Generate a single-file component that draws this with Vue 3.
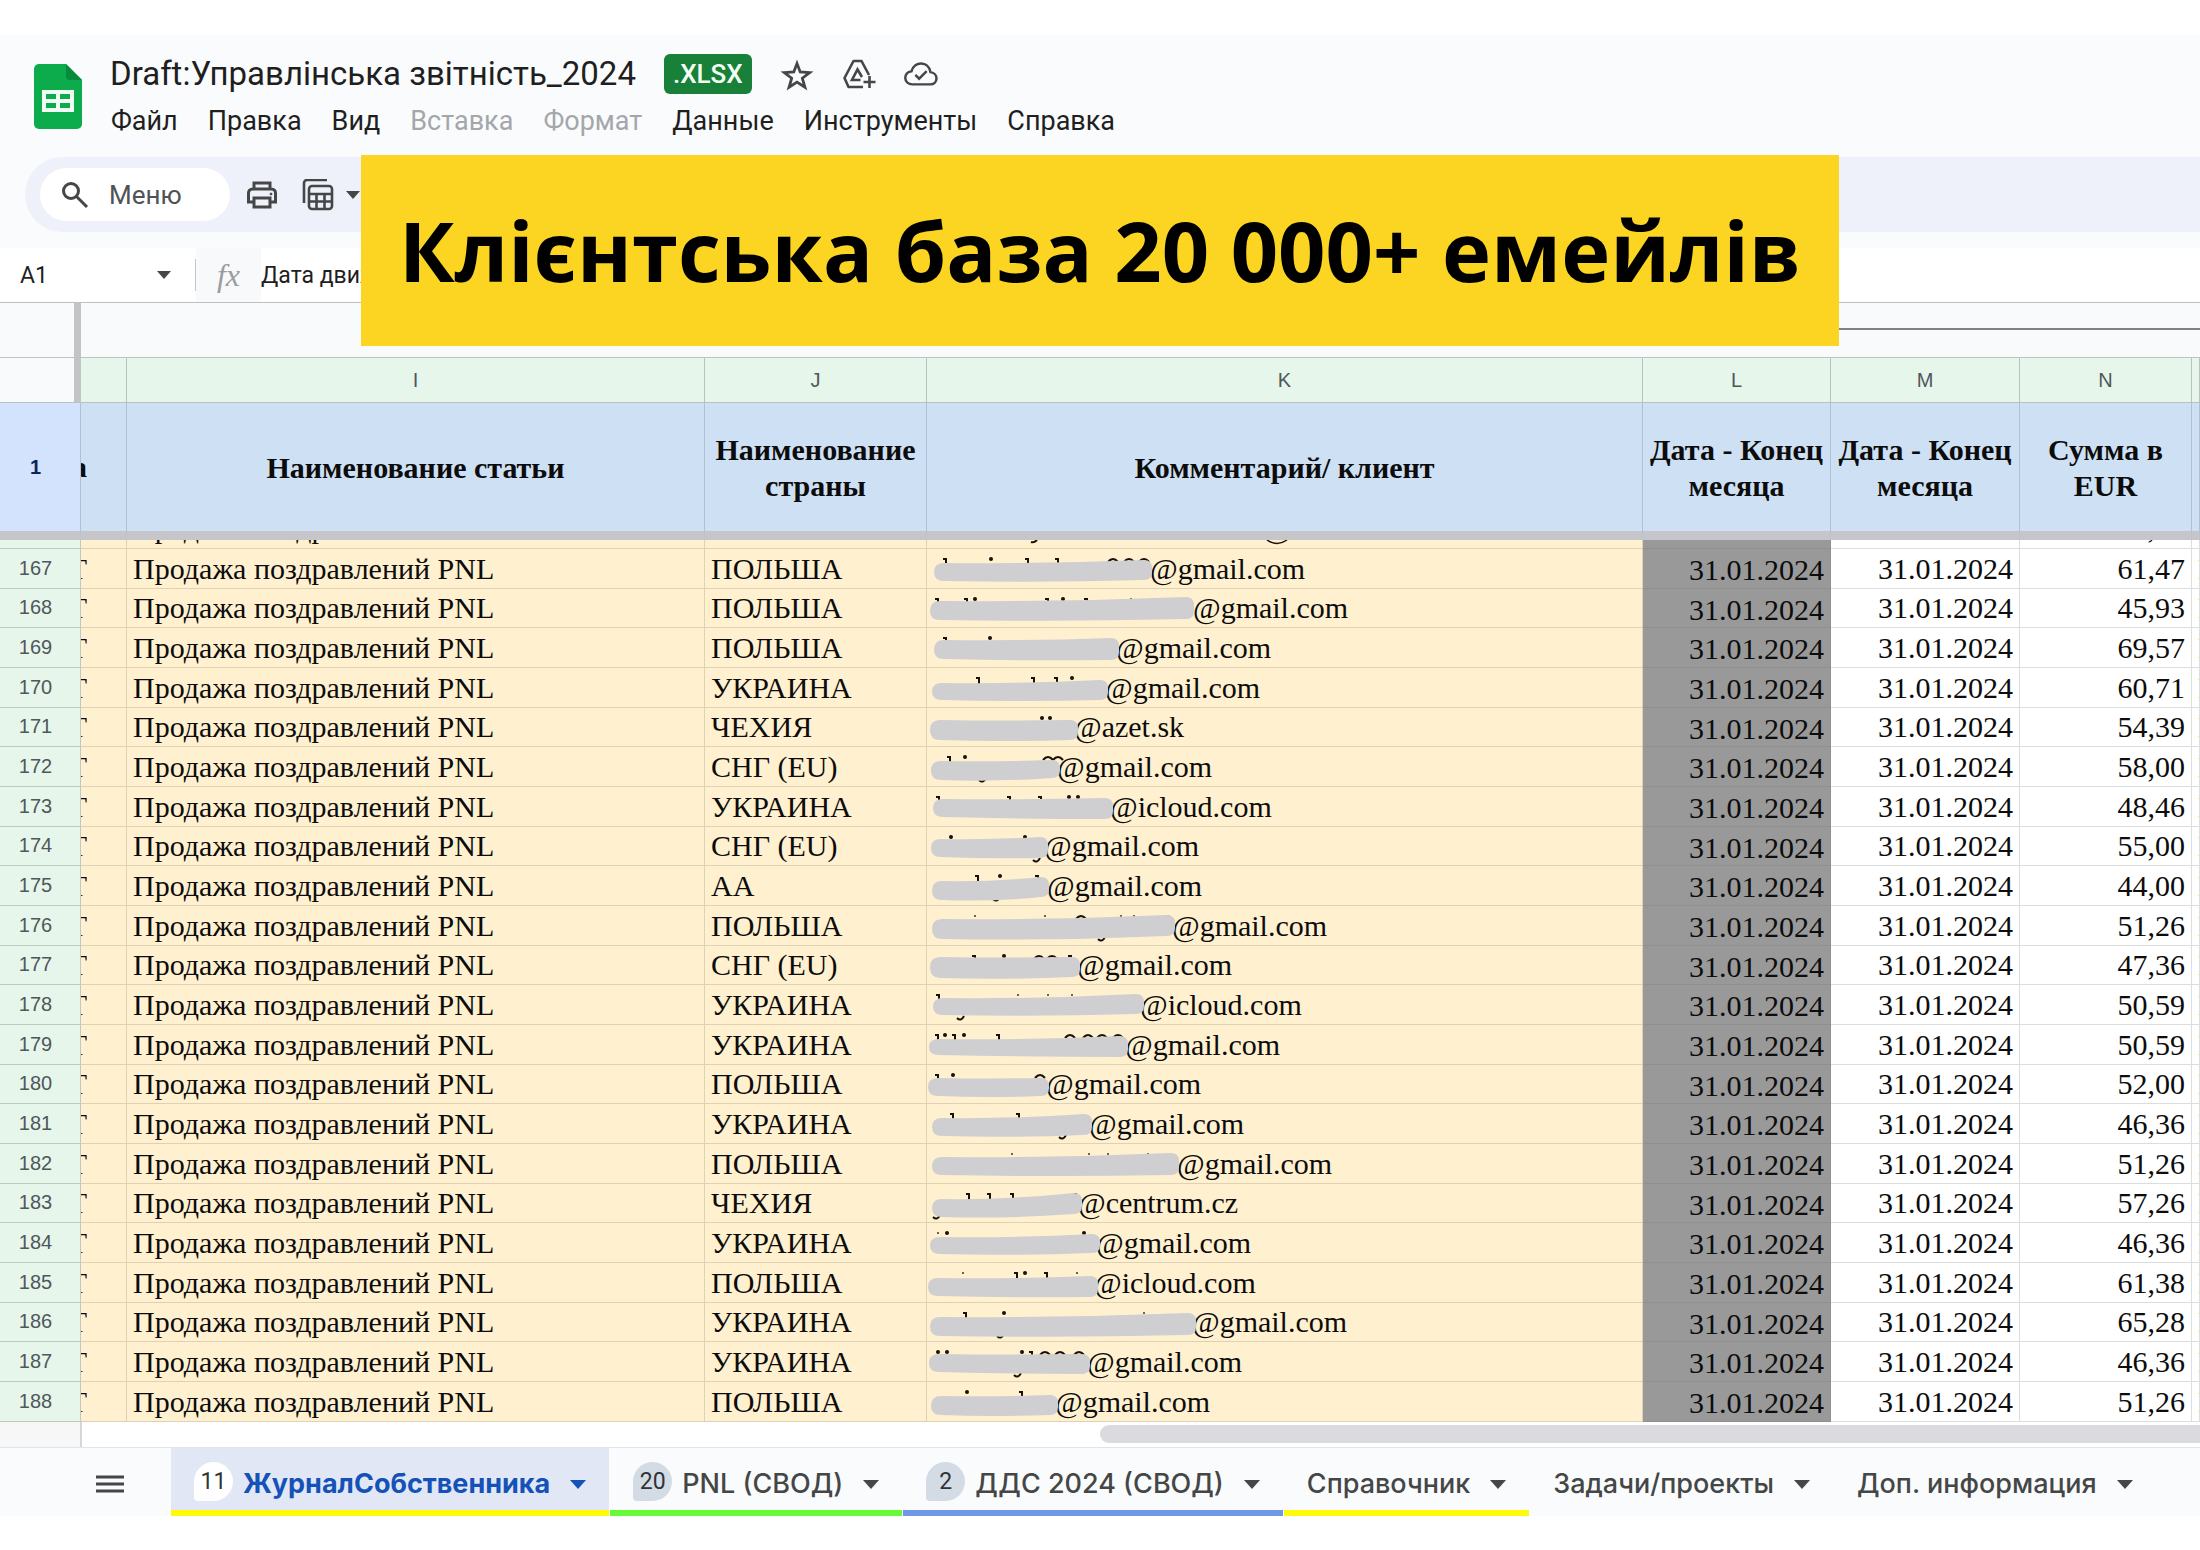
<script setup>
const menus = [
  { label: 'Файл' },
  { label: 'Правка' },
  { label: 'Вид' },
  { label: 'Вставка', disabled: true },
  { label: 'Формат', disabled: true },
  { label: 'Данные' },
  { label: 'Инструменты' },
  { label: 'Справка' },
]

const columns = ['', 'I', 'J', 'K', 'L', 'M', 'N', '']

const article = 'Продажа поздравлений PNL'
const date = '31.01.2024'

// blob: [left, left top, left bottom, right, right top, right bottom]
// at: where the mail domain starts; ticks, dots, arcs, specks and tails are the bits left uncovered
const rows = [
  { n: 167, country: 'ПОЛЬША', domain: '@gmail.com', sum: '61,47', at: 223, blob: [7, 14, 32, 225, 11, 31], ticks: [18, 100, 130], dots: [64], arcs: [186, 202, 217] },
  { n: 168, country: 'ПОЛЬША', domain: '@gmail.com', sum: '45,93', at: 266, blob: [3, 12, 31, 267, 8, 30], ticks: [10, 39, 120, 159], dots: [48, 136], specks: [204] },
  { n: 169, country: 'ПОЛЬША', domain: '@gmail.com', sum: '69,57', at: 189, blob: [7, 12, 31, 192, 10, 32], ticks: [18], dots: [63] },
  { n: 170, country: 'УКРАИНА', domain: '@gmail.com', sum: '60,71', at: 178, blob: [5, 15, 32, 181, 12, 32], ticks: [51, 106, 129], dots: [145] },
  { n: 171, country: 'ЧЕХИЯ', domain: '@azet.sk', sum: '54,39', at: 147, blob: [3, 12, 32, 151, 12, 32], dots: [115, 123] },
  { n: 172, country: 'СНГ (EU)', domain: '@gmail.com', sum: '58,00', at: 130, blob: [4, 14, 33, 133, 13, 31], ticks: [22], dots: [38], arcs: [121, 131], tails: [56] },
  { n: 173, country: 'УКРАИНА', domain: '@icloud.com', sum: '48,46', at: 183, blob: [6, 12, 30, 186, 11, 32], ticks: [11, 82, 113], dots: [142, 151] },
  { n: 174, country: 'СНГ (EU)', domain: '@gmail.com', sum: '55,00', at: 117, blob: [4, 12, 30, 121, 10, 31], dots: [24, 98], tails: [110] },
  { n: 175, country: 'АА', domain: '@gmail.com', sum: '44,00', at: 120, blob: [5, 15, 34, 122, 11, 31], ticks: [50, 110], dots: [73], tails: [70] },
  { n: 176, country: 'ПОЛЬША', domain: '@gmail.com', sum: '51,26', at: 245, blob: [5, 13, 33, 248, 9, 30], specks: [48, 118, 194, 207, 241], arcs: [154], tails: [175] },
  { n: 177, country: 'СНГ (EU)', domain: '@gmail.com', sum: '47,36', at: 150, blob: [3, 11, 32, 153, 11, 31], ticks: [47, 143], dots: [77], arcs: [112, 125] },
  { n: 178, country: 'УКРАИНА', domain: '@icloud.com', sum: '50,59', at: 213, blob: [6, 13, 30, 217, 9, 29], ticks: [11], specks: [91, 121, 145], tails: [34] },
  { n: 179, country: 'УКРАИНА', domain: '@gmail.com', sum: '50,59', at: 198, blob: [2, 14, 30, 201, 11, 32], ticks: [10, 27, 71], dots: [18, 37], arcs: [143, 161, 175, 191] },
  { n: 180, country: 'ПОЛЬША', domain: '@gmail.com', sum: '52,00', at: 119, blob: [1, 13, 31, 122, 13, 31], ticks: [10], dots: [26], arcs: [113] },
  { n: 181, country: 'УКРАИНА', domain: '@gmail.com', sum: '46,36', at: 162, blob: [5, 14, 32, 165, 10, 31], ticks: [25, 91], tails: [136] },
  { n: 182, country: 'ПОЛЬША', domain: '@gmail.com', sum: '51,26', at: 250, blob: [5, 13, 31, 252, 9, 31], specks: [85, 162, 181, 221] },
  { n: 183, country: 'ЧЕХИЯ', domain: '@centrum.cz', sum: '57,26', at: 151, blob: [5, 15, 33, 155, 9, 30], ticks: [41, 62, 85, 148], tails: [10] },
  { n: 184, country: 'УКРАИНА', domain: '@gmail.com', sum: '46,36', at: 169, blob: [3, 14, 31, 173, 11, 30], dots: [20, 157], specks: [11] },
  { n: 185, country: 'ПОЛЬША', domain: '@icloud.com', sum: '61,38', at: 167, blob: [1, 15, 33, 171, 13, 34], ticks: [89, 119], dots: [98], specks: [36, 150] },
  { n: 186, country: 'УКРАИНА', domain: '@gmail.com', sum: '65,28', at: 265, blob: [3, 14, 33, 269, 10, 32], ticks: [38], dots: [77], specks: [217], tails: [74] },
  { n: 187, country: 'УКРАИНА', domain: '@gmail.com', sum: '46,36', at: 160, blob: [2, 12, 30, 163, 12, 32], ticks: [104], dots: [11, 20, 95], arcs: [118, 133, 152], tails: [91] },
  { n: 188, country: 'ПОЛЬША', domain: '@gmail.com', sum: '51,26', at: 128, blob: [4, 14, 33, 131, 13, 33], ticks: [94], dots: [40] },
]

const blobPath = ([x0, t0, b0, x1, t1, b1]) => {
  const m = (x0 + x1) / 2
  return `M${x0} ${(t0 + b0) / 2} Q${x0} ${t0} ${x0 + 10} ${t0} Q${m} ${t0 + 1} ${x1 - 8} ${t1} Q${x1} ${t1} ${x1} ${t1 + 8} V${b1 - 8} Q${x1} ${b1} ${x1 - 8} ${b1} Q${m} ${b0 + 2} ${x0 + 10} ${b0} Q${x0} ${b0} ${x0} ${(t0 + b0) / 2}Z`
}

const tabs = [
  { label: 'ЖурналСобственника', count: 11, color: '#fff90a', active: true },
  { label: 'PNL (СВОД)', count: 20, color: '#66fa38' },
  { label: 'ДДС 2024 (СВОД)', count: 2, color: '#7096e6' },
  { label: 'Справочник', color: '#fff90a' },
  { label: 'Задачи/проекты', color: 'transparent' },
  { label: 'Доп. информация', color: 'transparent' },
]
</script>

<template>
  <div class="page">
    <header class="header">
      <svg class="logo" viewBox="0 0 48 65" aria-hidden="true">
        <path d="M5 0H32L48 16V60a5 5 0 0 1-5 5H5a5 5 0 0 1-5-5V5a5 5 0 0 1 5-5Z" fill="#0cab4b" />
        <path d="M32 0 48 16H36a4 4 0 0 1-4-4Z" fill="#078a3a" />
        <path fill-rule="evenodd" d="M8 26H40V48H8ZM12 30V35H22V30ZM26 30V35H36V30ZM12 39V44H22V39ZM26 39V44H36V39Z" fill="#f1fbf4" />
      </svg>
      <div>
        <div class="title-line">
          <h1 class="title">Draft:Управлінська звітність_2024</h1>
          <span class="badge">.XLSX</span>
          <button class="icon-btn" aria-label="Пометить">
            <svg width="34" height="34" viewBox="-1 -2 32 32" fill="none" stroke="#444746" stroke-width="2.6">
              <path d="M15 4 18 12 27 12.600 20 18 22.500 26.500 15 21.700 7.500 26.500 10 18 3 12.600 12 12Z" />
            </svg>
          </button>
          <button class="icon-btn" aria-label="Добавить на Диск">
            <svg width="34" height="32" viewBox="0 0 34 32" fill="none" stroke="#444746" stroke-width="2.6">
              <path d="M27 17 19.500 3H11.500L2.500 20 6.500 29H21" stroke-linejoin="round" />
              <path d="M18.500 22H10L15.500 11.500 20 19" />
              <path d="M27.500 18V30M21.500 24H33.500" />
            </svg>
          </button>
          <button class="icon-btn" aria-label="Сохранено">
            <svg width="34" height="28" viewBox="0 0 36 28" fill="none" stroke="#444746" stroke-width="2.600">
              <path d="M9 25C-1 25-1 12 8 11 11 0 26 0 28 12 37 13 36 25 28 25Z" />
              <path d="M12 15 16 19 24 11" />
            </svg>
          </button>
        </div>
        <nav class="menu">
          <button v-for="m in menus" :key="m.label" :disabled="m.disabled">{{ m.label }}</button>
        </nav>
      </div>
    </header>

    <div class="toolbar-row">
      <div class="toolbar">
        <label class="search">
          <svg width="28" height="28" viewBox="0 0 28 28" fill="none" stroke="#444746" stroke-width="3">
            <circle cx="10" cy="10" r="7.500" />
            <path d="M15.500 15.500 26 26" />
          </svg>
          <input type="text" placeholder="Меню" aria-label="Меню" />
        </label>
        <button class="icon-btn print" aria-label="Печать">
          <svg width="32" height="28" viewBox="0 0 32 28" fill="none" stroke="#444746" stroke-width="3">
            <path d="M8 8V2H24V8M8 21H2.500V12a4 4 0 0 1 4-4H25.500a4 4 0 0 1 4 4V21H24" />
            <path d="M8 17H24V26H8Z" />
            <circle cx="25" cy="13" r="1" fill="#444746" stroke-width="1" />
          </svg>
        </button>
        <button class="icon-btn views" aria-label="Режимы просмотра">
          <svg width="32" height="32" viewBox="0 0 32 32" fill="none" stroke="#444746" stroke-width="2.600">
            <path d="M2 24V4a3 3 0 0 1 3-3H25" />
            <path d="M10 7H27a3 3 0 0 1 3 3V27a3 3 0 0 1-3 3H10a3 3 0 0 1-3-3V10a3 3 0 0 1 3-3Z" />
            <path d="M7 15H30M7 22.500H30M14.500 15V30M22.500 15V30" />
          </svg>
          <svg width="14" height="8" viewBox="0 0 14 8"><path d="M0 0H14L7 8Z" fill="#444746" /></svg>
        </button>
      </div>
    </div>

    <div class="formula">
      <input class="cell-name" type="text" value="A1" aria-label="Ячейка" />
      <button class="icon-btn" aria-label="Список диапазонов">
        <svg width="14" height="8" viewBox="0 0 14 8"><path d="M0 0H14L7 8Z" fill="#444746" /></svg>
      </button>
      <span class="rule"></span>
      <span class="fx">fx</span>
      <input class="formula-text" type="text" value="Дата движ" aria-label="Формула" />
    </div>

    <div class="groups">
      <div class="groups-corner"></div>
      <div class="groups-line"></div>
    </div>

    <table class="sheet">
      <colgroup>
        <col class="w-head" /><col class="w-h" /><col class="w-i" /><col class="w-j" /><col />
        <col class="w-l" /><col class="w-m" /><col class="w-n" /><col class="w-o" />
      </colgroup>
      <thead>
        <tr class="letters">
          <td class="corner"></td>
          <th v-for="(c, i) in columns" :key="i" scope="col">{{ c }}</th>
        </tr>
        <tr class="titles">
          <th scope="row">1</th>
          <td><div class="cut">а</div></td>
          <td>Наименование статьи</td>
          <td>Наименование страны</td>
          <td>Комментарий/ клиент</td>
          <td>Дата - Конец месяца</td>
          <td>Дата - Конец месяца</td>
          <td>Сумма в<br />EUR</td>
          <td></td>
        </tr>
      </thead>
      <tbody>
        <tr class="peek">
          <th></th>
          <td class="tan"></td>
          <td class="tan"><div class="sliver">{{ article }}</div></td>
          <td class="tan"></td>
          <td class="tan mail">
            <svg class="cover" width="400" height="8" viewBox="0 0 400 8" fill="none" stroke="#16120a">
              <path d="M104 2Q107 3 110 0" stroke-width="2" />
              <path d="M340 0Q350 7 360 0" stroke-width="1.5" />
            </svg>
          </td>
          <td class="dim"></td>
          <td></td>
          <td class="num"><div class="sliver">51,26</div></td>
          <td></td>
        </tr>
        <tr v-for="r in rows" :key="r.n" class="row">
          <th scope="row">{{ r.n }}</th>
          <td class="tan"><div class="cut">Т</div></td>
          <td class="tan">{{ article }}</td>
          <td class="tan">{{ r.country }}</td>
          <td class="tan mail">
            <span :style="{ paddingLeft: r.at + 'px' }">{{ r.domain }}</span>
            <svg class="cover" width="300" height="39" viewBox="0 0 300 39">
              <g fill="none" stroke="#16120a">
                <path v-for="x in r.ticks" :key="'t' + x" :d="`M${x - 2} 10H${x + 1}V16`" stroke-width="2" />
                <path v-for="x in r.arcs" :key="'a' + x" :d="`M${x - 5} 13Q${x} 7 ${x + 5} 13`" stroke-width="2" />
                <path v-for="x in r.tails" :key="'d' + x" :d="`M${x - 4} 33Q${x} 37 ${x + 3} 31`" stroke-width="2" />
              </g>
              <circle v-for="x in r.dots" :key="'o' + x" :cx="x" cy="10" r="2" fill="#16120a" />
              <circle v-for="x in r.specks" :key="'s' + x" :cx="x" cy="10" r="1" fill="#3c3626" />
              <path :d="blobPath(r.blob)" fill="#cfcfd1" />
            </svg>
          </td>
          <td class="dim num">{{ date }}</td>
          <td class="num">{{ date }}</td>
          <td class="num">{{ r.sum }}</td>
          <td>П</td>
        </tr>
      </tbody>
    </table>

    <div class="scroll">
      <div class="scroll-corner"></div>
      <div class="thumb"></div>
    </div>

    <footer class="tabs">
      <button class="icon-btn all" aria-label="Все листы">
        <svg width="28" height="18" viewBox="0 0 28 18" stroke="#444746" stroke-width="3">
          <path d="M0 2H28M0 9H28M0 16H28" />
        </svg>
      </button>
      <button v-for="t in tabs" :key="t.label" class="tab" :class="{ active: t.active }" :style="{ borderBottomColor: t.color }">
        <span v-if="t.count" class="count">{{ t.count }}</span>
        <span>{{ t.label }}</span>
        <svg width="16" height="9" viewBox="0 0 16 9"><path d="M0 0H16L8 9Z" fill="currentColor" /></svg>
      </button>
    </footer>

    <div class="banner"><p>Клієнтська база 20 000+ емейлів</p></div>
  </div>
</template>

<style>
body {
  margin: 0;
  background: #fff;
}
</style>

<style scoped>
.page {
  position: relative;
  padding-top: 35px;
  overflow: hidden;
  font-family: Roboto, sans-serif;
  color: #1f1f1f;
}
button {
  padding: 0;
  border: 0;
  background: none;
  font: inherit;
  color: inherit;
}
input {
  min-width: 0;
  padding: 0;
  border: 0;
  background: none;
  font: inherit;
  color: inherit;
}
.icon-btn {
  display: flex;
  align-items: center;
}
.header {
  display: flex;
  gap: 28px;
  padding: 19px 34px 20px;
  background: #fafbfd;
}
.logo {
  width: 48px;
  height: 65px;
  margin-top: 10px;
}
.title-line {
  display: flex;
  align-items: center;
  height: 40px;
  gap: 28px;
}
.title {
  margin: 0;
  font-size: 33px;
  font-weight: 400;
  line-height: 40px;
}
.badge {
  padding: 0 9px;
  border-radius: 6px;
  background: #188038;
  color: #f4fff6;
  font-size: 26px;
  font-weight: 500;
  line-height: 40px;
}
.menu {
  display: flex;
  gap: 30px;
  margin-top: 11px;
  padding-left: 1px;
  font-size: 27px;
  line-height: 32px;
}
.menu button:disabled {
  color: #a4a7aa;
}
.toolbar-row {
  padding: 0 0 16px 25px;
  background: #fafbfd;
}
.toolbar {
  display: flex;
  align-items: center;
  height: 75px;
  padding-left: 15px;
  border-radius: 38px 0 0 38px;
  background: #eef1fa;
}
.search {
  display: flex;
  align-items: center;
  gap: 20px;
  width: 190px;
  height: 53px;
  padding-left: 21px;
  box-sizing: border-box;
  border-radius: 27px;
  background: #fff;
}
.search input {
  flex: 1;
  font-size: 26px;
}
.search input::placeholder {
  color: #505356;
  opacity: 1;
}
.print {
  margin-left: 16px;
}
.views {
  gap: 12px;
  margin-left: 24px;
}
.formula {
  display: flex;
  align-items: center;
  height: 54px;
  border-bottom: 1px solid #bdbfc1;
  font-size: 23px;
}
.cell-name {
  width: 137px;
  padding-left: 20px;
}
.rule {
  width: 1px;
  height: 32px;
  margin-left: 24px;
  background: #c4c7c5;
}
.fx {
  width: 65px;
  background: #f8f9fa;
  color: #9a9da0;
  font: italic 32px/54px "Liberation Serif", serif;
  text-align: center;
}
.formula-text {
  flex: 1;
}
.groups {
  display: flex;
  height: 54px;
  border-bottom: 1px solid #bfc2c1;
  background: #f9fafb;
}
.groups-corner {
  width: 74px;
  border-right: 7px solid #c3c4c5;
}
.groups-line {
  flex: 1;
  height: 25px;
  margin-left: 40%;
  border-bottom: 2px solid #7f8182;
}
.sheet {
  width: 100%;
  table-layout: fixed;
  border-spacing: 0;
  font: 30px/36px "Liberation Serif", serif;
  color: #0c0c0c;
}
.w-head { width: 81px; }
.w-h { width: 46px; }
.w-i { width: 578px; }
.w-j { width: 222px; }
.w-l { width: 188px; }
.w-m { width: 189px; }
.w-n { width: 172px; }
.w-o { width: 8px; }
.sheet th,
.sheet td {
  box-sizing: border-box;
  padding: 0 6px;
  border: solid #dcdddd;
  border-width: 0 1px 1px 0;
  overflow: hidden;
  white-space: nowrap;
  text-align: left;
}
.sheet th {
  font: 400 20px/24px "Liberation Sans", sans-serif;
  color: #50575b;
  text-align: center;
}
.sheet .letters td,
.sheet .letters th {
  height: 45px;
  background: #e6f6eb;
  border-color: #b5c3bb;
}
.sheet .letters .corner {
  background: #f9fafb;
  border-right: 7px solid #c3c4c5;
}
.sheet .titles th,
.sheet .titles td {
  height: 137px;
  background: #cee0f4;
  border-right-color: #b0c1d5;
  border-bottom: 9px solid #c6c6ca;
  font-weight: 700;
  text-align: center;
  white-space: normal;
}
.sheet .titles td {
  padding: 2px 0 0;
}
.sheet .titles th {
  padding-right: 15px;
  background: #d3e3fd;
  color: #0d2650;
}
.cut {
  display: flex;
  justify-content: flex-end;
  width: 6px;
  overflow: hidden;
}
.sheet td:nth-child(2) {
  padding: 0;
}
.sheet tbody th {
  padding-right: 15px;
  padding-bottom: 2px;
  background: #e6f6eb;
  border-color: #bccabf;
}
.sheet .row th,
.sheet .row td {
  height: 40px;
  line-height: 34px;
}
.sheet .row:nth-child(3n) th,
.sheet .row:nth-child(3n) td {
  height: 39px;
}
.sheet .peek th,
.sheet .peek td {
  height: 9px;
  padding-bottom: 0;
  line-height: 40px;
}
.sliver {
  display: flex;
  flex-direction: column;
  justify-content: flex-end;
  height: 8px;
  overflow: hidden;
}
.sheet .tan {
  background: #fff0d0;
  border-color: #dfd2b2;
}
.sheet .mail {
  position: relative;
}
.mail span {
  position: relative;
  margin-left: -6px;
}
.cover {
  position: absolute;
  top: 0;
  left: 0;
}
.sheet .num {
  text-align: right;
}
.sheet .dim {
  padding-top: 3px;
  background: #999;
  border-color: #909090;
}
.sheet .peek .dim {
  padding-top: 0;
}
.scroll {
  display: flex;
  justify-content: space-between;
  height: 25px;
  border-bottom: 1px solid #e1e3e6;
}
.scroll-corner {
  width: 80px;
  border-right: 2px solid #d5d6d8;
  background: #f7f7f8;
}
.thumb {
  width: 50%;
  height: 18px;
  margin-top: 3px;
  border-radius: 9px 0 0 9px;
  background: #dadadf;
}
.tabs {
  display: flex;
  height: 68px;
  background: #fafbfd;
  font: 500 27px/32px Inter, sans-serif;
  color: #444746;
}
.all {
  padding: 4px 47px 0 96px;
}
.tab {
  display: flex;
  align-items: center;
  box-sizing: border-box;
  height: 68px;
  padding: 10px 23px 0;
  border-bottom: 6px solid transparent;
  margin-right: 1px;
  white-space: nowrap;
}
.tab.active {
  background: #e1e7f5;
  color: #1552b8;
  font-weight: 700;
}
.tab svg {
  margin-left: 20px;
}
.count {
  width: 39px;
  margin: 0 10px 6px 0;
  border-radius: 20px 20px 20px 4px;
  background: #d3dce5;
  color: #303336;
  font: 400 23px/39px Roboto, sans-serif;
  text-align: center;
}
.active .count {
  background: #fff;
}
.banner {
  position: absolute;
  top: 155px;
  left: 0;
  right: 0;
  display: flex;
  justify-content: center;
}
.banner p {
  margin: 0;
  padding: 0 38px 2px;
  background: #fbd521;
  color: #000;
  font: 700 83px/189px "Open Sans", sans-serif;
  white-space: nowrap;
}
</style>
